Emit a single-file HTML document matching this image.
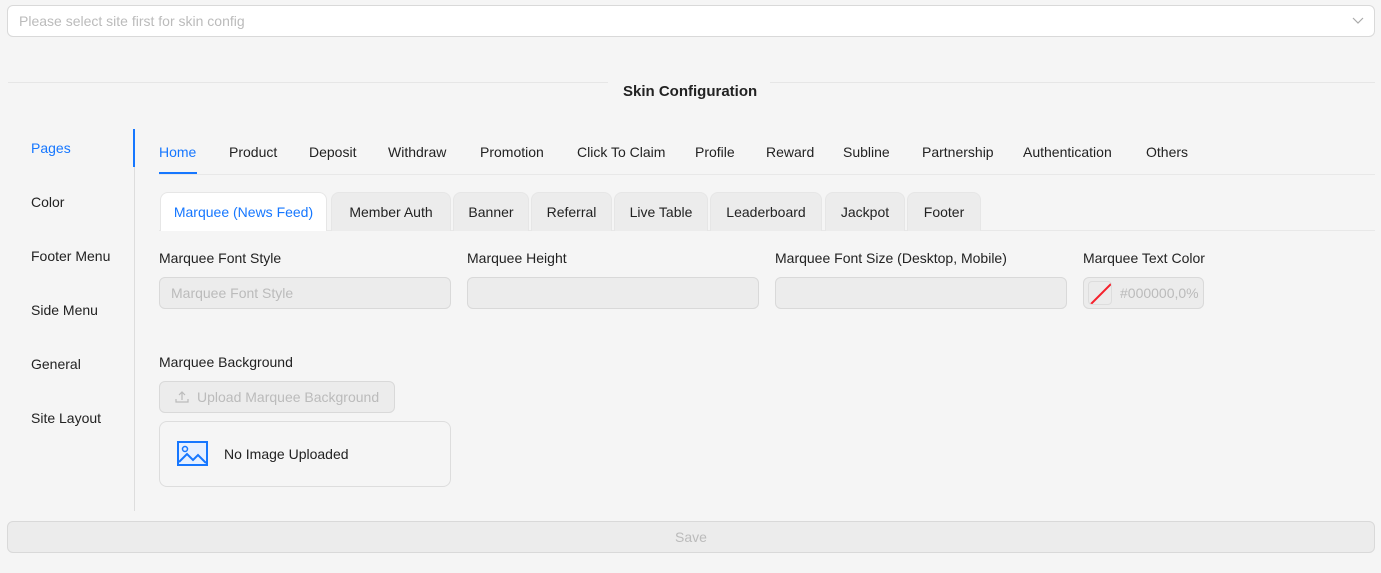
<!DOCTYPE html><html><head><style>
*{box-sizing:border-box;margin:0;padding:0}
body{width:1381px;height:573px;background:#f5f5f5;font-family:"Liberation Sans",sans-serif;font-size:14px;color:#222;position:relative;overflow:hidden}
.a{position:absolute;white-space:nowrap}
.sel{left:7px;top:5px;width:1368px;height:32px;background:#fff;border:1px solid #d9d9d9;border-radius:6px;color:#bbb;padding:7px 11px}
.line{top:82px;height:1px;background:#e6e6e6}
.side{left:31px;font-size:14px}
.nav{top:144px;font-size:14px}
.ct{top:192px;height:39px;background:#ececec;border:1px solid #e6e6e6;border-bottom:none;border-radius:8px 8px 0 0;text-align:center;line-height:38px}
.lbl{top:250px}
.inp{top:277px;height:32px;width:292px;background:#ececec;border:1px solid #d9d9d9;border-radius:6px;color:#bbb;padding:7px 11px}
</style></head><body>
<div class="a sel">Please select site first for skin config
<svg style="position:absolute;right:10px;top:10px" width="12" height="10" viewBox="0 0 12 10"><path d="M1 2l5 5 5-5" stroke="#aaa" fill="none" stroke-width="1.2"/></svg></div>
<div class="a line" style="left:8px;width:600px"></div>
<div class="a line" style="left:770px;width:605px"></div>
<div class="a" style="left:623px;top:83px;font-weight:bold;font-size:15px">Skin Configuration</div>
<div class="a" style="left:134px;top:129px;width:1px;height:382px;background:#ddd"></div>
<div class="a" style="left:133px;top:129px;width:2px;height:38px;background:#1677ff"></div>
<div class="a side" style="top:140px;color:#1677ff">Pages</div>
<div class="a side" style="top:194px">Color</div>
<div class="a side" style="top:248px">Footer Menu</div>
<div class="a side" style="top:302px">Side Menu</div>
<div class="a side" style="top:356px">General</div>
<div class="a side" style="top:410px">Site Layout</div>
<div class="a" style="left:159px;top:174px;width:1216px;height:1px;background:#e8e8e8"></div>
<div class="a" style="left:159px;top:172px;width:38px;height:2px;background:#1677ff"></div>
<div class="a nav" style="left:159px;color:#1677ff">Home</div>
<div class="a nav" style="left:229px">Product</div>
<div class="a nav" style="left:309px">Deposit</div>
<div class="a nav" style="left:388px">Withdraw</div>
<div class="a nav" style="left:480px">Promotion</div>
<div class="a nav" style="left:577px">Click To Claim</div>
<div class="a nav" style="left:695px">Profile</div>
<div class="a nav" style="left:766px">Reward</div>
<div class="a nav" style="left:843px">Subline</div>
<div class="a nav" style="left:922px">Partnership</div>
<div class="a nav" style="left:1023px">Authentication</div>
<div class="a nav" style="left:1146px">Others</div>
<div class="a" style="left:159px;top:230px;width:1216px;height:1px;background:#e8e8e8"></div>
<div class="a ct" style="left:160px;width:167px;background:#fff;color:#1677ff">Marquee (News Feed)</div>
<div class="a ct" style="left:331px;width:120px">Member Auth</div>
<div class="a ct" style="left:453px;width:76px">Banner</div>
<div class="a ct" style="left:531px;width:81px">Referral</div>
<div class="a ct" style="left:614px;width:94px">Live Table</div>
<div class="a ct" style="left:710px;width:112px">Leaderboard</div>
<div class="a ct" style="left:825px;width:80px">Jackpot</div>
<div class="a ct" style="left:907px;width:74px">Footer</div>
<div class="a lbl" style="left:159px">Marquee Font Style</div>
<div class="a lbl" style="left:467px">Marquee Height</div>
<div class="a lbl" style="left:775px">Marquee Font Size (Desktop, Mobile)</div>
<div class="a lbl" style="left:1083px">Marquee Text Color</div>
<div class="a inp" style="left:159px">Marquee Font Style</div>
<div class="a inp" style="left:467px"></div>
<div class="a inp" style="left:775px"></div>
<div class="a inp" style="left:1083px;width:121px;padding:7px 0 0 36px">#000000,0%
<div class="a" style="left:4px;top:3px;width:24px;height:24px;border:1px solid #ddd;border-radius:4px;overflow:hidden"><svg width="24" height="24"><path d="M2 22L22 2" stroke="#f5222d" stroke-width="2"/></svg></div></div>
<div class="a" style="left:159px;top:354px">Marquee Background</div>
<div class="a" style="left:159px;top:381px;width:236px;height:32px;background:#ececec;border:1px solid #d9d9d9;border-radius:6px;color:#bbb;padding:7px 0 0 37px">Upload Marquee Background
<svg class="a" style="left:15px;top:8px" width="14" height="14" viewBox="0 0 14 14"><path d="M7 10V2M4 5l3-3 3 3M1 9v3h12V9" stroke="#bbb" fill="none" stroke-width="1.2"/></svg></div>
<div class="a" style="left:159px;top:421px;width:292px;height:66px;border:1px solid #ddd;border-radius:8px;padding:24px 0 0 64px">No Image Uploaded
<svg class="a" style="left:17px;top:19px" width="31" height="25" viewBox="0 0 31 25"><rect x="1" y="1" width="29" height="23" fill="#e6f0ff" stroke="#1677ff" stroke-width="2"/><circle cx="8" cy="8" r="2.5" fill="none" stroke="#1677ff" stroke-width="1.5"/><path d="M2 21l8-8 6 6 5-5 8 8" fill="none" stroke="#1677ff" stroke-width="2"/></svg></div>
<div class="a" style="left:7px;top:521px;width:1368px;height:32px;background:#ececec;border:1px solid #d9d9d9;border-radius:6px;color:#bbb;text-align:center;line-height:30px">Save</div>
</body></html>
